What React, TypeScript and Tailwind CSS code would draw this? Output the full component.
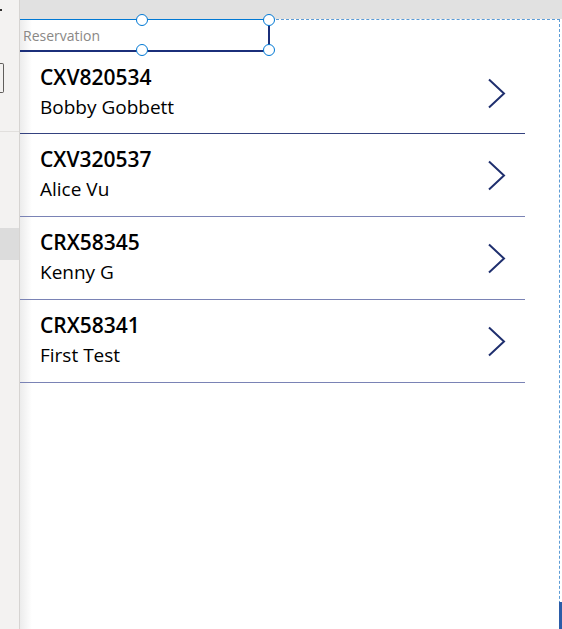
import React from 'react';

const rows = [
  { id: 'CXV820534', name: 'Bobby Gobbett', line: 'border-[#34427f]' },
  { id: 'CXV320537', name: 'Alice Vu', line: 'border-[#7a83b5]' },
  { id: 'CRX58345', name: 'Kenny G', line: 'border-[#7a83b5]' },
  { id: 'CRX58341', name: 'First Test', line: 'border-[#7a83b5]' },
];

const Handle = ({ className }: { className: string }) => (
  <div className={`absolute w-[12px] h-[12px] rounded-full bg-white border-[1.5px] border-[#0078d4] ${className}`}></div>
);

const App = () => {
  return (
    <div className="flex w-[562px] h-[629px] overflow-hidden bg-white font-['Open_Sans',sans-serif]">
      {/* left panel strip */}
      <div className="w-[20px] shrink-0 bg-[#f3f2f1] border-r border-[#d6d4d2] flex flex-col">
        <div className="h-[63px] pt-[9px]">
          <div className="w-[2px] h-[2px] bg-[#323130]"></div>
        </div>
        <div className="w-[4px] h-[30px] border border-l-0 border-[#605e5c] rounded-r-[2px]"></div>
        <div className="h-[39px] border-b border-[#e1dfdd]"></div>
        <div className="h-[96px]"></div>
        <div className="h-[32px] bg-[#dcdcdc]"></div>
      </div>

      <div className="flex-1 flex flex-col">
        <div className="h-[19px] bg-[#e1e1e1] shrink-0"></div>

        {/* canvas */}
        <div className="relative flex-1 flex">
          <div className="absolute left-0 top-0 bottom-0 w-[12px] bg-gradient-to-r from-[#ececec] to-white"></div>
          <div className="relative flex-1 border-t border-r border-dashed border-[#5b9bd5] mr-[2px]">
            {/* search input */}
            <div className="relative w-[250px] h-[33px] -mt-px border-t border-[#0078d4] border-b-2 border-r-2 border-b-[#1b2f7a] border-r-[#1b2f7a] flex items-center pl-[3px]">
              <span className="text-[14px] text-[#8a8886] mt-[1px]">Reservation</span>
              <Handle className="left-[116px] -top-[6px]" />
              <Handle className="-right-[7px] -top-[6px]" />
              <Handle className="left-[116px] -bottom-[6px]" />
              <Handle className="-right-[7px] -bottom-[6px]" />
            </div>

            {/* gallery */}
            <div className="relative w-[505px]">
              {rows.map((r, i) => (
                <div key={r.id} className={`${i === 0 ? 'h-[82px]' : 'h-[83px]'} border-b ${r.line} flex items-start pl-[20px] pr-[18px]`}>
                  <div className="flex-1 pt-[11px]">
                    <div className="text-[21px] leading-[28px] font-semibold text-black">{r.id}</div>
                    <div className="text-[19px] leading-[26px] text-black mt-[3px]">{r.name}</div>
                  </div>
                  <svg className="mt-[26px]" width="20" height="31" viewBox="0 0 20 31" fill="none">
                    <path d="M2 1.5 L17 15.5 L2 29.5" stroke="#1f2f6e" strokeWidth="2" />
                  </svg>
                </div>
              ))}
            </div>
          </div>
          <div className="absolute right-0 bottom-0 w-[3px] h-[27px] bg-[#2b5ca8]"></div>
        </div>
      </div>
    </div>
  );
};

export default App;
